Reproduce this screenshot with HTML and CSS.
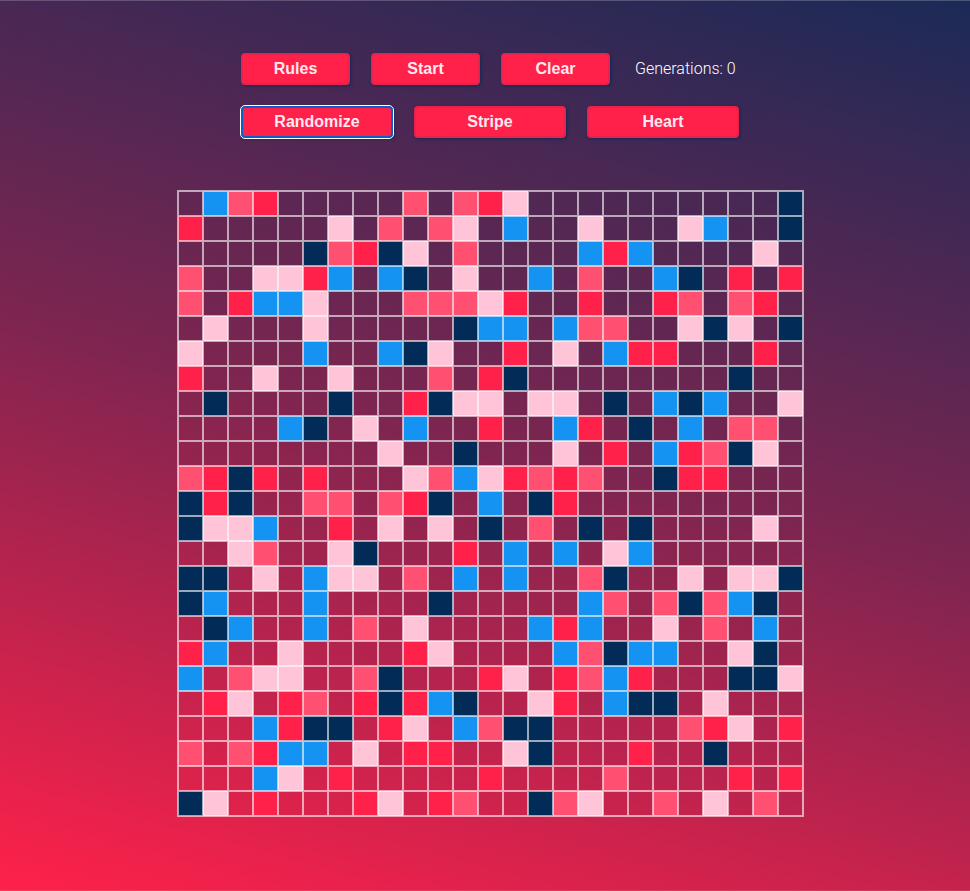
FILE: index.html
```html
<!DOCTYPE html>
<html lang="en">
<head>
<meta charset="utf-8">
<title>Game of Life</title>
<link rel="stylesheet" href="styles.css">
</head>
<body>
<div class="app">
	<div class="controls">
		<div class="row">
			<button class="btn small">Rules</button>
			<button class="btn small">Start</button>
			<button class="btn small">Clear</button>
			<span class="gens">Generations: 0</span>
		</div>
		<div class="row">
			<button class="btn wide focused">Randomize</button>
			<button class="btn wide">Stripe</button>
			<button class="btn wide">Heart</button>
		</div>
	</div>
	<div class="board" id="board"></div>
</div>
<script src="grid.js"></script>
</body>
</html>
```

FILE: styles.css
```css
html, body {
	height: 100%;
}
body {
	margin: 0;
	overflow: hidden;
	font-family: Roboto, "Liberation Sans", sans-serif;
	background: linear-gradient(15deg, #ff214a, #7e2550 50%, #1b2a57);
}
.app {
	display: flex;
	flex-direction: column;
	align-items: center;
	box-sizing: border-box;
	height: 100%;
	padding: 52px 0 0 11px;
	border-top: 1px solid rgba(255, 255, 255, 0.2);
	border-bottom: 1px solid rgba(255, 255, 255, 0.1);
}
.controls {
	width: 499px;
}
.row {
	display: flex;
	align-items: center;
	gap: 21px;
	margin-bottom: 21px;
}
.btn {
	height: 32px;
	padding: 0;
	background: #ff214a;
	border: 2px solid #e8224a;
	border-radius: 4px;
	box-shadow: 1px 1px 3px rgba(2, 43, 87, 0.8);
	color: #ffe9ef;
	font-family: "Liberation Sans", sans-serif;
	font-size: 16px;
	font-weight: bold;
}
.small {
	width: 109px;
}
.wide {
	width: 152px;
}
.focused {
	border-color: #0b5fc9;
	outline: 1px solid #fff;
}
.gens {
	margin: 0 0 2px 4px;
	color: #fff;
	font-size: 16px;
	font-weight: 300;
}
.board {
	display: grid;
	grid-template-columns: repeat(25, 25px);
	grid-auto-rows: 25px;
	width: 625px;
	margin-top: 31px;
	border: 1px solid rgba(255, 255, 255, 0.6);
}
.cell {
	border: 1px solid rgba(255, 255, 255, 0.6);
}
.b { background: #1493f2; }
.n { background: #022b57; }
.r { background: #ff214a; }
.s { background: #ff5072; }
.p { background: #ffc4d8; }
```

FILE: grid.js
```js
var rows = [
	".bsr.....s.srp..........n",
	"r.....p.s.sp.b..p...pb..n",
	".....nsrnp.s....brb....p.",
	"s..pprb.bn.p..b.s..bn.r.r",
	"s.rbbp...ssspr..r..rs.sr.",
	".p...p.....nbb.bss..pnp.n",
	"p....b..bnp..r.p.brr...r.",
	"r..p..p...s.rn........n..",
	".n....n..rnpp.pp.n.bnb..p",
	"....bn.p.b..r..br.n.b.ss.",
	"........p..n...p.r.brsnp.",
	"srnr.r...psbprsrs..nrr...",
	"nrn..ss.srn.b.nr.........",
	"nppb..r.p.p.n.s.n.n....p.",
	"..ps..pn...r.b.b.pb......",
	"nn.p.bpp.s.b.b..sn..p.ppn",
	"nb...b....n.....bs.snsbn.",
	".nb..b.s.p....brb..p.s.b.",
	"rb..p....rp....bsnbb..pn.",
	"b.spp..sn...rp.rsbr...nnp",
	".rp.rs.rnrbn..pr.bnn.p...",
	"...brnn.rp.bsnn.....srp.r",
	"s.srbb.p.rr..pn...r..n...",
	"...bp.r.....r....s....r.r",
	"np.r...rp.rs..nsp..s.p.s."
];

var board = document.getElementById("board");
for (var i = 0; i < rows.length; i++) {
	for (var j = 0; j < rows[i].length; j++) {
		var cell = document.createElement("div");
		cell.className = "cell " + rows[i][j];
		board.appendChild(cell);
	}
}
```
